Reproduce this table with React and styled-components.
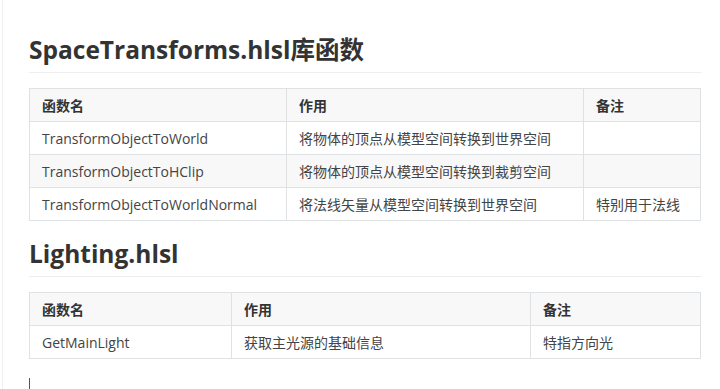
import React from 'react';
import styled, { createGlobalStyle } from 'styled-components';

const GlobalStyle = createGlobalStyle`
  html, body {
    margin: 0;
    padding: 0;
    background: #fff;
  }
  body {
    font-family: 'Open Sans', 'Noto Sans CJK SC', sans-serif;
    color: #333;
  }
`;

const Page = styled.div`
  min-height: 389px;
  box-sizing: border-box;
  margin-left: 2px;
  border-left: 1px solid #f0f0f0;
  padding: 32px 20px 0 26px;
`;

const Heading = styled.h2`
  margin: 0 0 15px;
  padding-bottom: 4px;
  font-size: 24.5px;
  line-height: 36px;
  font-weight: 700;
  color: #333;
  border-bottom: 1px solid #eee;
  width: 672px;
`;

const Table = styled.table`
  border-collapse: collapse;
  table-layout: fixed;
  width: 671px;
  margin-bottom: 15px;
  font-size: 14px;
`;

const HeadCell = styled.th`
  text-align: left;
  font-weight: 700;
  height: 32px;
  padding: 0 12px;
  border: 1px solid #dfe2e5;
  background: #f8f8f8;
  color: #333;
`;

const Row = styled.tr`
  background: ${(p) => (p.$striped ? '#f8f8f8' : '#fff')};
`;

const Cell = styled.td`
  height: 32px;
  padding: 0 12px;
  border: 1px solid #dfe2e5;
  color: #444;
  white-space: nowrap;
`;

const Caret = styled.div`
  width: 1px;
  height: 11px;
  margin-top: 19px;
  background: #555;
`;

const spaceRows = [
  ['TransformObjectToWorld', '将物体的顶点从模型空间转换到世界空间', ''],
  ['TransformObjectToHClip', '将物体的顶点从模型空间转换到裁剪空间', ''],
  ['TransformObjectToWorldNormal', '将法线矢量从模型空间转换到世界空间', '特别用于法线'],
];

const lightingRows = [['GetMainLight', '获取主光源的基础信息', '特指方向光']];

function FuncTable({ widths, rows }) {
  return (
    <Table>
      <colgroup>
        {widths.map((w, i) => (
          <col key={i} style={{ width: w }} />
        ))}
      </colgroup>
      <thead>
        <tr>
          <HeadCell>函数名</HeadCell>
          <HeadCell>作用</HeadCell>
          <HeadCell>备注</HeadCell>
        </tr>
      </thead>
      <tbody>
        {rows.map((r, i) => (
          <Row key={r[0]} $striped={i % 2 === 1}>
            {r.map((c, j) => (
              <Cell key={j}>{c}</Cell>
            ))}
          </Row>
        ))}
      </tbody>
    </Table>
  );
}

export default function App() {
  return (
    <>
      <GlobalStyle />
      <Page>
        <Heading>SpaceTransforms.hlsl库函数</Heading>
        <FuncTable widths={[257, 297, 117]} rows={spaceRows} />
        <Heading>Lighting.hlsl</Heading>
        <FuncTable widths={[202, 299, 170]} rows={lightingRows} />
        <Caret />
      </Page>
    </>
  );
}
